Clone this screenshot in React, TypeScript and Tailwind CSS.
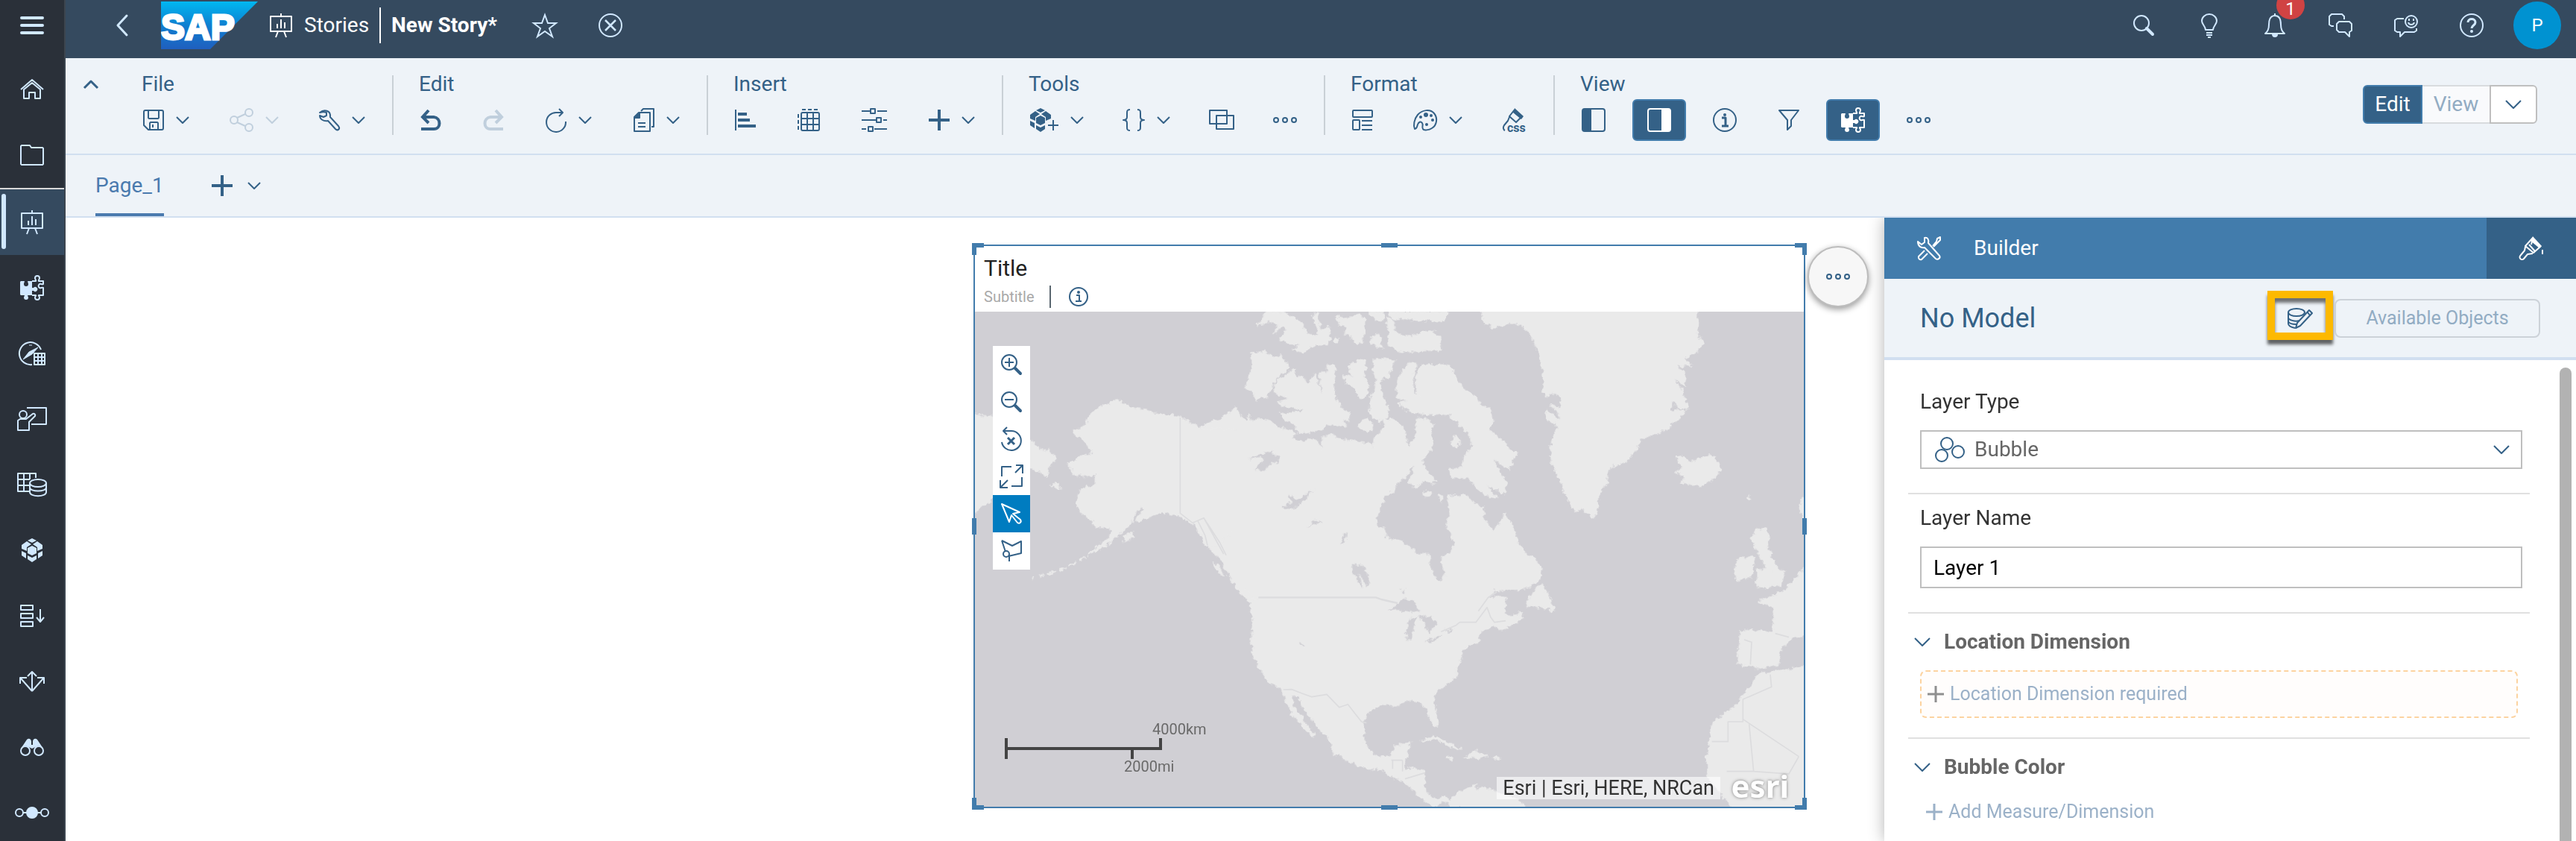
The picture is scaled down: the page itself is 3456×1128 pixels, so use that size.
import React from "react";

type Kids = { children?: React.ReactNode };

function Glyph({ w, h, sw = 2, children }: Kids & { w: number; h: number; sw?: number }) {
  return (
    <svg
      width={w}
      height={h}
      viewBox={`0 0 ${w} ${h}`}
      fill="none"
      stroke="currentColor"
      strokeWidth={sw}
      strokeLinejoin="round"
      aria-hidden="true"
      className="shrink-0 overflow-visible"
    >
      {children}
    </svg>
  );
}

/* ---------- icons ---------- */

const Chevron = () => (
  <Glyph w={18} h={10}>
    <path d="M1 1l8 8 8-8" />
  </Glyph>
);
const ChevronWide = () => (
  <Glyph w={22} h={12}>
    <path d="M1 1l10 10L21 1" />
  </Glyph>
);
const ChevronUp = () => (
  <Glyph w={22} h={14} sw={3}>
    <path d="M2 12l9-9 9 9" />
  </Glyph>
);
const Plus = () => (
  <Glyph w={28} h={28} sw={4}>
    <path d="M14 0v28M0 14h28" />
  </Glyph>
);
const PlusSmall = () => (
  <Glyph w={22} h={22} sw={3}>
    <path d="M11 0v22M0 11h22" />
  </Glyph>
);
const Dots = () => (
  <Glyph w={32} h={10}>
    <circle cx="4" cy="5" r="3" />
    <circle cx="16" cy="5" r="3" />
    <circle cx="28" cy="5" r="3" />
  </Glyph>
);
const Menu = () => (
  <Glyph w={32} h={24} sw={4}>
    <path d="M2 2h28M2 12h28M2 22h28" strokeLinecap="round" />
  </Glyph>
);
const Back = () => (
  <Glyph w={16} h={28} sw={3}>
    <path d="M14 1L2 14l12 13" strokeLinecap="round" />
  </Glyph>
);
const Easel = () => (
  <Glyph w={30} h={32}>
    <path d="M1 4h28v20H1zM15 0v4M11 24l-3 8M19 24l3 8M10 20v-6M15 20V8M20 20v-8" />
  </Glyph>
);
const Star = () => (
  <Glyph w={32} h={32}>
    <path d="M16 2l4 11h11l-9 7 4 11-10-7-10 7 4-11-9-7h11z" strokeLinejoin="miter" />
  </Glyph>
);
const CloseCircle = () => (
  <Glyph w={32} h={32}>
    <circle cx="16" cy="16" r="15" />
    <path d="M9 9l14 14M23 9L9 23" strokeWidth="2.5" />
  </Glyph>
);
const Search = () => (
  <Glyph w={28} h={28}>
    <circle cx="11" cy="11" r="10" />
    <path d="M18 18l8 8" strokeWidth="4" strokeLinecap="round" />
  </Glyph>
);
const Bulb = () => (
  <Glyph w={22} h={32}>
    <path d="M6 22c0-5-5-7-5-12a10 9 0 0 1 20 0c0 5-5 7-5 12zM7 26h8M7 29h8M9 32h4" />
  </Glyph>
);
const Bell = () => (
  <Glyph w={28} h={32}>
    <path d="M1 27c4-3 5-6 5-12 0-7 2-12 8-12s8 5 8 12c0 6 1 9 5 12zM14 3V0" />
    <path d="M10 28h8a4 4 0 0 1-8 0z" fill="currentColor" stroke="none" />
  </Glyph>
);
const Chats = () => (
  <Glyph w={32} h={32}>
    <path d="M7 17H4l-3-2V4l3-3h14l3 3v4" />
    <path d="M14 11h14l3 3v9l-3 2v6l-6-6h-8l-3-3v-8z" />
  </Glyph>
);
const Feedback = () => (
  <Glyph w={32} h={32}>
    <path d="M13 7H4L1 9v14l3 2h4v6l6-6h13l3-2v-3" />
    <circle cx="23" cy="11" r="8" />
    <path d="M19 12c1 4 7 4 8 0" />
    <path d="M20 7v3M26 7v3" />
  </Glyph>
);
const Help = () => (
  <Glyph w={32} h={32}>
    <circle cx="16" cy="16" r="15" />
    <path d="M11 12c0-6 10-6 10 0 0 4-5 4-5 8" strokeWidth="3" />
    <circle cx="16" cy="24" r="2" fill="currentColor" stroke="none" />
  </Glyph>
);

const Save = () => (
  <Glyph w={28} h={28}>
    <path d="M3 1h22a2 2 0 0 1 2 2v22a2 2 0 0 1-2 2H7l-6-6V3a2 2 0 0 1 2-2z" />
    <path d="M7 1v10l1 1h12l1-1V1M9 27v-9l1-1h9l1 1v9M13 20v4" />
  </Glyph>
);
const Share = () => (
  <Glyph w={32} h={32}>
    <circle cx="26" cy="6" r="5" />
    <circle cx="6" cy="16" r="5" />
    <circle cx="26" cy="26" r="5" />
    <path d="M10 13l11-5M10 19l11 5" />
  </Glyph>
);
const Wrench = () => (
  <Glyph w={28} h={28}>
    <path d="M1 4c6-5 15-3 14 6l11 12c3 4-1 7-4 4L12 15C6 16 1 13 1 8l5 2 4-2V4L6 3z" />
  </Glyph>
);
const Undo = () => (
  <Glyph w={28} h={28} sw={4}>
    <path d="M11 1L3 10l8 8M3 10h15c10 1 10 16 0 16H1" strokeLinejoin="miter" />
  </Glyph>
);
const Redo = () => (
  <Glyph w={28} h={28} sw={4}>
    <path d="M17 1l8 9-8 8M25 10H10c-10 1-10 16 0 16h17" strokeLinejoin="miter" />
  </Glyph>
);
const Refresh = () => (
  <Glyph w={28} h={32}>
    <path d="M23 6h-8A13 13 0 1 0 27 18M18 1l5 5-5 5" />
  </Glyph>
);
const Copy = () => (
  <Glyph w={28} h={32}>
    <path d="M10 4l3-3h14v24h-3M1 12l6-6h15v25H1zM6 20h10M6 25h10" />
    <path d="M1 13l7-7v7z" fill="currentColor" />
  </Glyph>
);
const BarChart = () => (
  <Glyph w={28} h={28}>
    <path d="M1 0v28" />
    <path d="M4 4h12v4H4zM4 12h16v4H4zM4 20h24v4H4z" fill="currentColor" stroke="none" />
  </Glyph>
);
const Table = () => (
  <Glyph w={30} h={30}>
    <rect x="5" y="5" width="24" height="24" rx="2" />
    <path d="M13 5v24M21 5v24M5 13h24M5 21h24M6 1h5M14 1h5M22 1h5M1 7v5M1 15v5M1 23v5" />
  </Glyph>
);
const Sliders = () => (
  <Glyph w={34} h={30}>
    <path d="M0 3h12M21 3h13M0 15h20M29 15h5M0 27h6M17 27h17" />
    <path d="M12 0h6v6h-6zM20 12h6v6h-6zM9 24h6v6H9z" />
  </Glyph>
);
const Cube = () => (
  <Glyph w={28} h={32}>
    <path
      d="M14 0l6 3-6 3-6-3zM0 9l7-5 6 4-6 4v5l-7-3zM28 9l-7-5-6 4 6 4v5l7-3zM14 10l6 3v7l-6 3-6-3v-7zM0 17l6 3v7l-6-4zM28 17l-6 3v7l6-4zM8 23l6 3 6-3v5l-6 4-6-4z"
      fill="currentColor"
      stroke="none"
    />
  </Glyph>
);
const CubeAdd = () => (
  <Glyph w={38} h={32}>
    <path
      d="M14 0l6 3-6 3-6-3zM0 9l7-5 6 4-6 4v5l-7-3zM28 9l-7-5-6 4 6 4v5l7-3zM14 10l6 3v7l-6 3-6-3v-7zM0 17l6 3v7l-6-4zM8 23l6 3 6-3v5l-6 4-6-4z"
      fill="currentColor"
      stroke="none"
    />
    <path d="M31 16v14M24 23h14" />
  </Glyph>
);
const Braces = () => (
  <Glyph w={30} h={30}>
    <path d="M10 1C6 1 6 3 6 6v5c0 2-1 4-5 4 4 0 5 2 5 4v5c0 3 0 5 4 5M20 1c4 0 4 2 4 5v5c0 2 1 4 5 4-4 0-5 2-5 4v5c0 3 0 5-4 5" />
  </Glyph>
);
const Frames = () => (
  <Glyph w={34} h={28}>
    <path d="M1 1h23v18H1zM10 8h23v18H10z" />
  </Glyph>
);
const Layout = () => (
  <Glyph w={28} h={28}>
    <rect x="1" y="1" width="26" height="9" rx="1" />
    <rect x="1" y="14" width="9" height="13" rx="1" />
    <path d="M13 15h14M13 21h14M13 27h14" />
  </Glyph>
);
const Palette = () => (
  <Glyph w={32} h={28}>
    <path d="M2 26C0 21 1 13 6 7c6-7 17-8 22-2s4 16-3 20c-4 3-11 3-12 1-2-3 1-5-1-8s-5-1-6 2-1 6-4 6z" />
    <g fill="currentColor" stroke="none">
      <circle cx="17" cy="7" r="3" />
      <circle cx="10" cy="10" r="2" />
      <circle cx="24" cy="8" r="2" />
      <circle cx="26" cy="14" r="2" />
      <circle cx="18" cy="20" r="2" />
    </g>
  </Glyph>
);
const CssBrush = () => (
  <Glyph w={32} h={32}>
    <path d="M16 2L9 11l9 8 8-8M9 12l-2 5-5 6c-2 3-1 6 1 7" />
    <path d="M16 0l12 11-3 4-11-9z" fill="currentColor" stroke="none" />
    <text x="6" y="32" className="fill-current font-[Roboto] text-[16px] font-bold" stroke="none">
      css
    </text>
  </Glyph>
);
const PanelLeft = () => (
  <Glyph w={32} h={32}>
    <rect x="1" y="1" width="30" height="30" rx="3" />
    <path d="M2 1h11v30H2z" fill="currentColor" stroke="none" />
  </Glyph>
);
const PanelRight = () => (
  <Glyph w={32} h={32}>
    <rect x="1" y="1" width="30" height="30" rx="3" />
    <path d="M19 1h11v30H19z" fill="currentColor" stroke="none" />
  </Glyph>
);
const Info = () => (
  <Glyph w={32} h={32}>
    <circle cx="16" cy="16" r="15" />
    <path d="M12 13h5v11M12 24h9" strokeWidth="3" />
    <circle cx="16" cy="9" r="2" fill="currentColor" stroke="none" />
  </Glyph>
);
const InfoSmall = () => (
  <Glyph w={26} h={26}>
    <circle cx="13" cy="13" r="12" />
    <path d="M10 11h4v8M9 19h8" />
    <circle cx="13" cy="7" r="2" fill="currentColor" stroke="none" />
  </Glyph>
);
const Filter = () => (
  <Glyph w={28} h={28}>
    <path d="M1 1h26L17 14v8l-5 5V14z" />
  </Glyph>
);
const Puzzle = () => (
  <Glyph w={32} h={32}>
    <path
      d="M1 7h4c2 0 0 2 0 4a3 3 0 0 0 6 0c0-2-2-4 0-4h5v9h2a3 3 0 1 1 0 4h-2v6h-5c-2 0 0 2 0 3a3 3 0 0 1-6 0c0-1 2-3 0-3H1l-1-1V8z"
      fill="currentColor"
      stroke="none"
    />
    <path d="M16 7h5c1-1-1-2-1-4a3 3 0 0 1 6 0c0 2-2 3-1 4h6v4c-2 1-3-1-5 0a3 3 0 0 0 0 5c2 1 3-1 5 0v10h-6c-1 1 1 1 1 3a3 3 0 0 1-6 0c0-2 2-2 1-3h-5" />
  </Glyph>
);

const Home = () => (
  <Glyph w={32} h={28}>
    <path d="M1 14L16 1l15 13M5 14v12h7v-8h8v8h7V14L16 5z" />
  </Glyph>
);
const Folder = () => (
  <Glyph w={32} h={28}>
    <path d="M1 26V2l1-1h11l2 3h15l1 1v21l-1 1H2z" />
  </Glyph>
);
const Compass = () => (
  <Glyph w={36} h={32}>
    <path d="M18 31A15 15 0 1 1 30 11" />
    <path d="M6 24l8-10 12-6-8 9zM14 5h4" fill="currentColor" strokeWidth="1" />
    <path d="M21 16h14v15H21zM21 21h14M21 26h14M26 16v15M31 16v15" />
  </Glyph>
);
const Presenter = () => (
  <Glyph w={40} h={32}>
    <path d="M13 1h26v22H19" />
    <circle cx="8" cy="10" r="5" />
    <path d="M1 31V18l3-2h8l9-7c2-1 4 1 3 3l-8 8v11z" />
  </Glyph>
);
const TableDb = () => (
  <Glyph w={40} h={32}>
    <path d="M16 25H1V1h24v6M1 9h16M1 17h15M9 1v24M17 1v8" />
    <ellipse cx="28" cy="14" rx="11" ry="5" />
    <path d="M17 14v12c0 7 22 7 22 0V14M17 20c0 6 22 6 22 0" />
  </Glyph>
);
const ListDown = () => (
  <Glyph w={32} h={30}>
    <path d="M1 1h16v6H1zM1 12h16v6H1zM1 23h16v6H1zM27 6v16M22 17l5 6 5-6" />
  </Glyph>
);
const Spread = () => (
  <Glyph w={34} h={28}>
    <path d="M17 27V2M11 7l6-6 6 6M17 27L2 10M1 17V9h9M17 27l15-17M33 17V9h-9" />
  </Glyph>
);
const Binoculars = () => (
  <Glyph w={32} h={24}>
    <path d="M1 14L9 2c2-2 5-2 6 2v5h2V4c1-4 4-4 6-2l8 12-6-4-9 4-9-4z" fill="currentColor" stroke="none" />
    <circle cx="7" cy="17" r="6" />
    <circle cx="25" cy="17" r="6" />
  </Glyph>
);
const Timeline = () => (
  <Glyph w={46} h={16}>
    <circle cx="6" cy="8" r="5" />
    <circle cx="40" cy="8" r="5" />
    <circle cx="23" cy="8" r="7" fill="currentColor" />
    <path d="M11 8h24" />
  </Glyph>
);

const Tools = () => (
  <Glyph w={32} h={32}>
    <path d="M1 7l5 4 4-3V2C14 1 16 4 15 9l15 17c2 3-2 6-5 4L10 15C5 16 1 13 1 7zM10 19l-8 8c-1 3 2 5 4 4l8-8M21 13l5-6 1-4 4-2v4l-3 3-6 6" />
  </Glyph>
);
const Brush = () => (
  <Glyph w={32} h={32}>
    <path d="M18 2L8 13l11 9 10-9M18 2l-2 9M8 14l-1 5-5 6c-4 4 1 8 4 5l5-6 7-1M13 11l8 9" />
    <path d="M18 0l12 13-3 3-12-10z" fill="currentColor" stroke="none" />
    <path d="M31 18v6" />
  </Glyph>
);
const DbEdit = () => (
  <Glyph w={34} h={28}>
    <ellipse cx="12" cy="6" rx="11" ry="5" />
    <path d="M1 6v15c0 3 4 5 9 6M1 13c0 3 9 6 15 4M1 18c1 3 6 4 11 4" />
    <path d="M11 27l2-7L29 3l4 4-16 17zM27 6l3 4" />
  </Glyph>
);
const Bubbles = () => (
  <Glyph w={40} h={34}>
    <circle cx="16" cy="9" r="8" />
    <circle cx="31" cy="20" r="8" />
    <circle cx="9" cy="25" r="8" />
  </Glyph>
);
const ZoomIn = () => (
  <Glyph w={28} h={28}>
    <circle cx="11" cy="11" r="10" />
    <path d="M11 5v12M5 11h12" />
    <path d="M19 19l7 7" strokeWidth="4" strokeLinecap="round" />
  </Glyph>
);
const ZoomOut = () => (
  <Glyph w={28} h={28}>
    <circle cx="11" cy="11" r="10" />
    <path d="M5 11h12" />
    <path d="M19 19l7 7" strokeWidth="4" strokeLinecap="round" />
  </Glyph>
);
const ResetView = () => (
  <Glyph w={28} h={32}>
    <path d="M3 5h11a13 13 0 1 1-13 15M8 0L3 5l5 5" />
    <path d="M9 14l9 9M18 14l-9 9" strokeWidth="3" />
  </Glyph>
);
const Expand = () => (
  <Glyph w={32} h={32}>
    <path d="M16 3H3v13M30 17v12H16M22 1h9v11M31 1L21 11M1 21v10h10M1 31l10-10" />
  </Glyph>
);
const Pointer = () => (
  <Glyph w={28} h={28}>
    <path d="M1 1l10 24 3-9 8 10c3 2 6-1 4-4l-10-8 9-2z" />
  </Glyph>
);
const Lasso = () => (
  <Glyph w={28} h={30}>
    <path d="M1 1l14 7 12-6v16l-17 4M1 1l5 15M11 20v9" />
    <circle cx="7" cy="19" r="4" />
  </Glyph>
);

const SapLogo = () => (
  <svg width="130" height="64" viewBox="0 0 130 64" role="img" aria-label="SAP">
    <defs>
      <linearGradient id="sapFill" x1="0" y1="0" x2="0" y2="1">
        <stop offset="0" stopColor="#00b8f1" />
        <stop offset="0.5" stopColor="#0f7fd0" />
        <stop offset="1" stopColor="#1f5fbf" />
      </linearGradient>
    </defs>
    <path d="M0 0h130L66 64H0z" fill="url(#sapFill)" />
    <text
      x="0"
      y="51"
      fill="#fff"
      stroke="#fff"
      strokeWidth="3"
      className="font-['Liberation_Sans'] text-[48px] font-bold"
    >
      SAP
    </text>
  </svg>
);

/* ---------- map ---------- */

const mainland =
  "-60,430 0,455 35,475 40,460 75,440 110,430 150,405 165,395 175,385 190,410 215,445 225,415 240,440 265,430 310,440 345,465 400,475 420,490 395,510 430,522 480,512 505,520 520,560 522,505 560,495 600,515 650,520 700,525 725,540 730,500 770,470 765,440 790,430 820,440 850,465 860,520 870,545 890,510 900,480 900,430 940,430 970,450 960,490 970,540 950,570 920,600 945,640 985,685 960,692 930,680 905,708 870,690 885,650 895,610 870,640 855,670 825,685 805,720 780,740 755,785 742,830 745,865 770,870 785,920 830,915 870,945 910,975 955,980 955,1026 970,1056 995,1088 1018,1061 1005,1016 1003,986 1040,970 1050,930 1040,895 1020,865 1033,820 1028,740 1060,740 1105,740 1130,770 1170,790 1175,840 1205,880 1235,860 1255,810 1280,850 1300,900 1320,950 1350,980 1380,995 1407,1040 1405,1066 1383,1089 1340,1116 1220,1121 1190,1150 1215,1146 1255,1151 1262,1176 1255,1206 1285,1231 1320,1206 1335,1231 1300,1251 1245,1284 1230,1266 1200,1271 1160,1286 1150,1306 1158,1326 1110,1346 1090,1366 1075,1406 1062,1436 1062,1466 1020,1501 980,1531 968,1566 985,1626 990,1656 978,1671 950,1631 945,1596 915,1573 880,1566 840,1571 820,1588 780,1581 735,1591 700,1621 690,1666 690,1726 710,1766 750,1793 795,1786 815,1746 845,1736 875,1738 868,1776 855,1806 850,1846 890,1838 930,1846 935,1896 940,1936 980,1961 1015,1951 1035,1966 1070,1936 1110,1916 1145,1901 1135,1930 1160,1912 1200,1921 1230,1936 1300,1956 1350,2000 1040,2000 1028,1975 1000,1975 985,1992 960,1985 930,1965 895,1935 865,1905 830,1880 790,1868 770,1850 740,1835 710,1842 650,1820 600,1795 560,1770 560,1740 540,1710 500,1670 470,1630 440,1590 425,1550 398,1545 410,1590 440,1630 465,1670 490,1705 485,1712 450,1680 435,1650 400,1625 385,1590 370,1550 355,1515 300,1485 275,1440 245,1390 237,1320 242,1240 230,1170 180,1120 145,1060 120,1010 95,980 60,950 20,880 0,855 -60,820";

const arctic = [
  "235,165 290,160 330,183 360,180 390,225 345,265 325,285 300,340 255,358 245,325 210,305 225,270 240,210",
  "410,232 415,265 445,258 460,290 490,255 510,290 515,325 522,320 510,240 545,245 540,215 570,212 575,240 565,290 580,360 600,385 635,410 630,440 600,435 620,460 580,460 540,450 520,475 430,490 415,460 375,440 355,410 440,400 445,390 365,385 340,365 385,348 330,325 325,300 345,275",
  "635,210 690,190 700,235 685,250 715,290 700,335 672,348 650,310 620,285 605,255 645,262 625,220",
  "730,190 815,195 800,235 785,270 760,270 755,310 775,360 790,410 770,440 730,430 712,400 715,350 735,310 740,270 725,240",
  "835,250 870,205 905,212 885,260 890,320 915,340 900,318 897,260 920,215 975,212 1030,215 1062,262 1090,310 1140,340 1165,380 1195,385 1215,430 1195,475 1250,520 1275,550 1310,575 1290,600 1275,640 1235,610 1215,590 1225,630 1265,690 1255,735 1180,695 1230,750 1185,745 1140,710 1110,670 1040,665 1030,635 1090,625 1085,595 1125,545 1115,500 1080,465 1040,420 1000,410 960,415 890,410 850,390 830,365 865,360 822,345 822,300",
  "350,110 380,70 355,60 330,90 345,45 300,40 260,60 290,10 300,0 370,0 400,20 440,45 465,90 510,95 490,40 480,20 500,5 515,70 550,60 555,100 545,130 490,135 440,165 405,155 430,130 375,125",
  "575,15 620,30 660,10 690,25 690,100 680,130 650,128 640,100 610,85 615,60 590,50",
  "720,100 750,90 765,150 715,130",
  "710,0 770,0 765,40 730,30",
  "780,20 810,40 820,90 880,100 910,85 960,75 1000,100 995,155 930,158 840,162 785,135 790,80",
  "790,0 1030,0 1015,35 985,45 960,35 880,35 840,25 800,30",
  "665,460 695,425 730,460 710,490",
];

const atlantic = [
  "75,-9 100,50 135,65 200,45 240,50 280,90 310,160 330,240 330,330 345,345 370,320 400,350 408,385 355,375 385,400 398,425 380,450 345,435 345,395 352,405 400,440 415,470 375,480 360,540 365,610 390,660 415,720 455,800 490,795 535,830 550,790 555,740 580,700 600,625 660,610 700,560 730,510 830,475 905,400 875,398 845,400 850,350 870,390 915,390 890,320 860,270 905,300 900,235 860,215 930,220 900,185 945,170 975,125 950,90 955,-9",
  "410,400 430,500 380,460",
  "865,590 890,578 912,605 940,600 1005,575 1025,590 1048,630 1030,665 960,705 885,685 905,670 865,645 895,625",
  "1185,880 1225,870 1245,905 1230,945 1260,1000 1280,1040 1300,1060 1290,1100 1245,1110 1215,1105 1225,1020 1190,960 1170,920",
];

const europe = [
  "1320,870 1345,870 1338,920 1315,930 1312,900",
  "1350,900 1395,905 1390,940 1365,950 1350,945",
  "1435,890 1415,925 1400,945 1405,950 1370,975 1352,985 1378,1005 1378,1068 1322,1062 1318,1150 1350,1165 1385,1155 1390,1110 1410,1080 1435,1075",
  "1435,1160 1390,1170 1350,1180 1345,1200 1312,1265 1275,1310 1265,1400 1265,1450 1310,1540 1435,1540",
  "1435,700 1422,730 1435,800",
  "985,940 995,970 1005,1010 960,995 970,960",
];

const bering = [
  "880,750 840,738 800,738 760,725 720,715 690,712 670,695 640,685 615,675 600,695 570,700 545,720 520,735 510,760 490,785 450,798 452,815 490,840 505,865 530,890 520,905 485,898 455,925 425,938 450,965 450,980 500,985 540,980 540,1020 500,1030 480,1040 470,1060 460,1095 480,1125 500,1150 530,1165 535,1190 570,1190 600,1200 605,1215 590,1235 560,1258 535,1280 510,1300 540,1290 580,1270 620,1230 660,1200 690,1170 695,1140 725,1108 740,1115 710,1145 700,1170 740,1155 780,1140 800,1130 840,1140 870,1140 900,1155 930,1170 960,1200 975,1230 990,1270 1020,1270 1100,1200 1100,800 1000,800 960,795 930,770",
  "40,735 90,745 150,745 150,1060 95,1100 40,1145",
  "250,820 276,835 320,885 350,878 385,915 350,950 345,990 310,965 250,950",
  "355,1020 380,1018 405,1035 385,1035",
  "650,1230 690,1210 690,1235 655,1250",
];

const caribbean = [
  "920,760 965,740 1030,765 1085,795 1040,790 980,755",
  "1090,825 1140,800 1190,825 1140,832",
  "170,140 215,150 260,200 225,185",
  "85,45 105,55 125,100 100,80",
];

const lakes = [
  "790,1205 850,1155 890,1165 915,1210 860,1205 820,1200",
  "870,1240 900,1230 890,1270 880,1320 862,1325 860,1280",
  "905,1225 960,1225 990,1255 965,1270 955,1300 945,1290 930,1250",
  "940,1325 1005,1302 985,1318 950,1332",
  "1005,1285 1055,1275 1045,1287",
  "640,1020 690,1020 712,1090 705,1110 682,1070 672,1050 685,1115 655,1070",
  "222,593 320,557 315,572 350,580 345,610 320,605 285,645 250,632 285,605 275,588",
  "360,785 400,765 385,732 420,755 490,720 440,765 415,788 370,795",
  "460,868 490,840 525,848 485,855",
  "595,938 610,895 622,895 612,930",
  "840,1120 852,1115 852,1135 842,1135",
  "428,1330 436,1330 450,1350 440,1348",
];

function WorldMap() {
  return (
    <svg
      viewBox="-876 0 3336 1992"
      preserveAspectRatio="none"
      className="absolute inset-0 h-full w-full"
      role="img"
      aria-label="Map of North America and the North Atlantic"
    >
      <defs>
        <filter id="coast" filterUnits="userSpaceOnUse" x="-876" y="0" width="3336" height="1992">
          <feTurbulence type="fractalNoise" baseFrequency="0.05" numOctaves="3" seed="4" result="n" />
          <feDisplacementMap in="SourceGraphic" in2="n" scale="26" xChannelSelector="R" yChannelSelector="G" />
        </filter>
      </defs>
      <g filter="url(#coast)">
        <g fill="#eaeaea" stroke="#eaeaea" strokeWidth="3" strokeLinejoin="round">
          <polygon points={mainland} />
          {arctic.map((p) => (
            <polygon key={p} points={p} />
          ))}
          <ellipse cx="1060" cy="522" rx="18" ry="24" />
          <ellipse cx="578" cy="115" rx="9" ry="11" />
          <ellipse cx="942" cy="733" rx="16" ry="10" />
          <ellipse cx="997" cy="750" rx="7" ry="14" />
          <g transform="translate(1080 0)">
            {atlantic.map((p) => (
              <polygon key={p} points={p} />
            ))}
            <circle cx="1158" cy="748" r="8" />
          </g>
          <g transform="matrix(2.3725 0 0 1.5113 -930 -324)">
            {europe.map((p) => (
              <polygon key={p} points={p} />
            ))}
          </g>
          <g transform="translate(-930 -324)">
            {bering.map((p) => (
              <polygon key={p} points={p} />
            ))}
            <path d="M535 1285L440 1345 380 1370 280 1398" fill="none" strokeWidth="8" strokeDasharray="34 14 20 22" />
          </g>
          <g transform="translate(0 966)">
            {caribbean.map((p) => (
              <polygon key={p} points={p} />
            ))}
            <ellipse cx="1225" cy="830" rx="14" ry="4" />
            <ellipse cx="1040" cy="832" rx="14" ry="4" />
          </g>
        </g>
        <g fill="#d0cfd4">
          {lakes.map((p) => (
            <polygon key={p} points={p} />
          ))}
        </g>
      </g>
      <g fill="none" stroke="#dcdcde" strokeWidth="5" strokeLinejoin="round">
        <path d="M265 1150H738L760 1158 825 1173" strokeWidth="7" />
        <path d="M-50 426V811L0 850 45 830 110 930 135 980M20 840L50 900 60 940M45 830L100 930 125 975" />
        <path d="M1000 1288L1060 1262 1075 1250H1140L1185 1190 1200 1230 1215 1250 1260 1244" />
        <path d="M1150 1205L1190 1150 1225 1128" />
        <path d="M365 1521L400 1520 440 1536 480 1550 540 1540 590 1592 625 1580 660 1625 680 1650 700 1655" />
        <path d="M800 1805H845M805 1805V1840M845 1805V1850M855 1880L935 1856" />
        <path d="M2090 1730H2155V1650H2215V1560L2330 1510 2325 1460M2215 1640L2440 1790M2240 1660L2258 1850H2150M2258 1850L2400 1860 2440 1790" />
        <path d="M2220 1320L2250 1330 2245 1420M2345 1295L2400 1310" />
      </g>
    </svg>
  );
}

/* ---------- shell ---------- */

const navItems: { label: string; icon: React.ReactNode; active?: boolean }[] = [
  { label: "Home", icon: <Home /> },
  { label: "Files", icon: <Folder /> },
  { label: "Stories", icon: <Easel />, active: true },
  { label: "Analytic Applications", icon: <Puzzle /> },
  { label: "Data Analyzer", icon: <Compass /> },
  { label: "Digital Boardroom", icon: <Presenter /> },
  { label: "Datasets", icon: <TableDb /> },
  { label: "Modeler", icon: <Cube /> },
  { label: "Data Actions", icon: <ListDown /> },
  { label: "Allocations", icon: <Spread /> },
  { label: "Data Locking", icon: <Binoculars /> },
  { label: "Connections", icon: <Timeline /> },
];

function SideNav() {
  return (
    <nav className="flex w-[88px] shrink-0 flex-col overflow-hidden border-r-2 border-[#3c454f] bg-[#2a3039] text-[#d1e8ff]">
      <button aria-label="Menu" className="flex h-[76px] shrink-0 items-center justify-center pb-2">
        <Menu />
      </button>
      {navItems.map((n) => (
        <button
          key={n.label}
          aria-label={n.label}
          className={
            n.active
              ? "relative flex h-[90px] shrink-0 items-center justify-center border-t-2 border-[#d9d9d9] bg-[#354a5f]"
              : "flex h-[88px] shrink-0 items-center justify-center"
          }
        >
          {n.active && <span className="absolute top-1.5 bottom-2 left-0.5 w-1.5 rounded-full bg-[#d1e8ff]" />}
          {n.icon}
        </button>
      ))}
    </nav>
  );
}

const shellActions: { label: string; icon: React.ReactNode; badge?: string }[] = [
  { label: "Search", icon: <Search /> },
  { label: "Tips", icon: <Bulb /> },
  { label: "Notifications", icon: <Bell />, badge: "1" },
  { label: "Discussions", icon: <Chats /> },
  { label: "Feedback", icon: <Feedback /> },
  { label: "Help", icon: <Help /> },
];

function ShellBar() {
  return (
    <header className="flex h-[78px] shrink-0 items-center overflow-hidden bg-[#354a5f] pr-2 pb-[10px] text-[#d1e8ff]">
      <button aria-label="Back" className="flex h-16 w-32 items-center pl-[68px]">
        <Back />
      </button>
      <SapLogo />
      <a href="#stories" className="ml-4 flex items-center gap-4 text-white">
        <Easel />
        Stories
      </a>
      <span className="ml-3.5 h-12 w-0.5 bg-white" />
      <h1 className="ml-3.5 font-bold text-white">New Story*</h1>
      <button aria-label="Favorite" className="ml-12">
        <Star />
      </button>
      <button aria-label="Close" className="ml-14">
        <CloseCircle />
      </button>
      <div className="ml-auto flex items-center">
        {shellActions.map((a) => (
          <button key={a.label} aria-label={a.label} className="relative flex h-16 w-[88px] items-center justify-center">
            {a.icon}
            {a.badge && (
              <span className="absolute -top-3.5 right-1 flex size-[38px] items-end justify-center rounded-full bg-[#d04343] pb-1 text-[24px] leading-5 text-white">
                {a.badge}
              </span>
            )}
          </button>
        ))}
        <button aria-label="Profile" className="mx-3 flex size-16 items-center justify-center rounded-full bg-[#0092d1] text-[24px] text-white">
          P
        </button>
      </div>
    </header>
  );
}

type Tool = { label: string; icon: React.ReactNode; menu?: boolean; disabled?: boolean; on?: boolean };

const groups: { title: string; row: string; tools: Tool[] }[] = [
  {
    title: "File",
    row: "mt-4 flex h-10 items-center gap-[54px]",
    tools: [
      { label: "Save", icon: <Save />, menu: true },
      { label: "Share", icon: <Share />, menu: true, disabled: true },
      { label: "Settings", icon: <Wrench />, menu: true },
    ],
  },
  {
    title: "Edit",
    row: "mt-4 flex h-10 items-center gap-14",
    tools: [
      { label: "Undo", icon: <Undo /> },
      { label: "Redo", icon: <Redo />, disabled: true },
      { label: "Refresh", icon: <Refresh />, menu: true },
      { label: "Copy", icon: <Copy />, menu: true },
    ],
  },
  {
    title: "Insert",
    row: "mt-4 flex h-10 items-center gap-14",
    tools: [
      { label: "Chart", icon: <BarChart /> },
      { label: "Table", icon: <Table /> },
      { label: "Input Control", icon: <Sliders /> },
      { label: "Add", icon: <Plus />, menu: true },
    ],
  },
  {
    title: "Tools",
    row: "mt-4 flex h-10 items-center gap-[52px]",
    tools: [
      { label: "Add Model", icon: <CubeAdd />, menu: true },
      { label: "Scripting", icon: <Braces />, menu: true },
      { label: "Popup", icon: <Frames /> },
      { label: "More Tools", icon: <Dots /> },
    ],
  },
  {
    title: "Format",
    row: "mt-4 flex h-10 items-center gap-[54px]",
    tools: [
      { label: "Layout", icon: <Layout /> },
      { label: "Theme", icon: <Palette />, menu: true },
      { label: "CSS Editor", icon: <CssBrush /> },
    ],
  },
  {
    title: "View",
    row: "mt-4 flex h-10 items-center gap-14",
    tools: [
      { label: "Left Panel", icon: <PanelLeft /> },
      { label: "Right Panel", icon: <PanelRight />, on: true },
      { label: "Info Panel", icon: <Info /> },
      { label: "Filter", icon: <Filter /> },
      { label: "Widgets", icon: <Puzzle />, on: true },
      { label: "More Views", icon: <Dots /> },
    ],
  },
];

function ToolButton({ t }: { t: Tool }) {
  if (t.on) {
    return (
      <button
        aria-label={t.label}
        aria-pressed="true"
        className="-mx-5 -my-2 flex h-14 w-[72px] items-center justify-center rounded-md border-2 border-[#427cac] bg-[#346187] text-white"
      >
        {t.icon}
      </button>
    );
  }
  return (
    <button
      aria-label={t.label}
      disabled={t.disabled}
      className={t.disabled ? "flex items-center gap-4 text-[#c0cfdd]" : "flex items-center gap-4"}
    >
      {t.icon}
      {t.menu && <Chevron />}
    </button>
  );
}

function Toolbar() {
  return (
    <div className="flex h-[130px] shrink-0 border-b-2 border-[#d1dff0] bg-[#eef3f8] pt-[23px] pr-[52px] text-[#346187]">
      <button aria-label="Collapse toolbar" className="flex h-6 w-[68px] shrink-0 items-center justify-center">
        <ChevronUp />
      </button>
      {groups.map((g) => (
        <section key={g.title} aria-label={g.title} className="h-20 shrink-0 border-r-2 border-[#c9d0d6] px-9 last-of-type:border-r-0">
          <h2 className="-ml-0.5 h-6 leading-6">{g.title}</h2>
          <div className={g.row}>
            {g.tools.map((t) => (
              <ToolButton key={t.label} t={t} />
            ))}
          </div>
        </section>
      ))}
      <div className="mt-[13px] ml-auto flex h-[52px]">
        <button className="w-20 rounded-l-md border-2 border-[#427cac] bg-[#346187] text-white">Edit</button>
        <button className="w-[90px] border-y-2 border-[#d8dbde] bg-[#f9fafc] text-[#92acc3]">View</button>
        <button aria-label="View options" className="flex w-16 items-center justify-center rounded-r-md border-2 border-[#bfbfbf] bg-white">
          <ChevronWide />
        </button>
      </div>
    </div>
  );
}

function PageTabs() {
  return (
    <div className="flex h-[84px] shrink-0 items-stretch border-b-2 border-[#d1dff0] bg-[#eef3f8] pl-10 text-[#346187]">
      <a href="#page-1" className="flex items-center border-b-4 border-[#4a7aae] pt-1 text-[#4a7aae]">
        Page_1
      </a>
      <button aria-label="Add page" className="ml-16 flex items-center gap-5">
        <Plus />
        <Chevron />
      </button>
    </div>
  );
}

const mapTools: { label: string; icon: React.ReactNode; on?: boolean }[] = [
  { label: "Zoom in", icon: <ZoomIn /> },
  { label: "Zoom out", icon: <ZoomOut /> },
  { label: "Reset view", icon: <ResetView /> },
  { label: "Full extent", icon: <Expand /> },
  { label: "Select", icon: <Pointer />, on: true },
  { label: "Lasso", icon: <Lasso /> },
];

function Handles() {
  return (
    <>
      <span className="absolute -top-1 -left-1 size-4 border-t-6 border-l-6 border-[#427cac]" />
      <span className="absolute -top-1 -right-1 size-4 border-t-6 border-r-6 border-[#427cac]" />
      <span className="absolute -bottom-1 -left-1 size-4 border-b-6 border-l-6 border-[#427cac]" />
      <span className="absolute -right-1 -bottom-1 size-4 border-r-6 border-b-6 border-[#427cac]" />
      <span className="absolute -top-1 left-1/2 h-1.5 w-[22px] -translate-x-1/2 bg-[#427cac]" />
      <span className="absolute -bottom-1 left-1/2 h-1.5 w-[22px] -translate-x-1/2 bg-[#427cac]" />
      <span className="absolute top-1/2 -left-1 h-[22px] w-1.5 -translate-y-1/2 bg-[#427cac]" />
      <span className="absolute top-1/2 -right-1 h-[22px] w-1.5 -translate-y-1/2 bg-[#427cac]" />
    </>
  );
}

function GeoWidget() {
  return (
    <article className="absolute top-9 left-[1218px] flex h-[756px] w-[1116px] flex-col border-2 border-[#427cac] bg-white">
      <header className="h-[88px] shrink-0 px-3 pt-3">
        <h2 className="text-[30px] leading-9 text-[#222]">Title</h2>
        <div className="mt-1 flex items-center text-[#346187]">
          <span className="text-[20px] leading-8 text-[#a9a9a9]">Subtitle</span>
          <span className="ml-5 h-[30px] w-0.5 bg-[#5a6770]" />
          <button aria-label="Information" className="ml-6">
            <InfoSmall />
          </button>
        </div>
      </header>
      <div className="relative flex-1 overflow-hidden bg-[#d0cfd4]">
        <WorldMap />
        <div role="toolbar" aria-label="Map tools" className="absolute top-[46px] left-6 flex w-[50px] flex-col bg-white text-[#346187]">
          {mapTools.map((t) => (
            <button
              key={t.label}
              aria-label={t.label}
              className={
                t.on
                  ? "flex h-[50px] items-center justify-center bg-[#007cc0] text-white"
                  : "flex h-[50px] items-center justify-center"
              }
            >
              {t.icon}
            </button>
          ))}
        </div>
        <div className="absolute bottom-11 left-10 w-[270px] text-[20px] leading-5 text-[#6a6a6a]">
          <p className="pl-[198px]">4000km</p>
          <svg width="212" height="28" viewBox="0 0 212 28" fill="none" stroke="#444" strokeWidth="4" aria-hidden="true" className="mt-0.5 block">
            <path d="M2 0v28M2 14h209M209 0v16M171 14v14" />
          </svg>
          <p className="pl-[160px]">2000mi</p>
        </div>
        <p className="absolute right-28 bottom-2.5 bg-white/60 px-2 text-[27px] leading-[30px] text-[#323232]">
          Esri | Esri, HERE, NRCan
        </p>
        <span className="absolute right-5 bottom-1 font-['Noto_Sans'] text-[42px] leading-12 font-bold text-white [text-shadow:0_0_4px_#777]">
          esri
        </span>
      </div>
      <Handles />
      <button
        aria-label="More actions"
        className="absolute top-0 left-[1117px] flex size-[82px] items-center justify-center rounded-full border-2 border-[#bdbdbd] bg-[#f7f7f7] text-[#346187] shadow-[0_3px_8px_rgba(0,0,0,0.4)]"
      >
        <Dots />
      </button>
    </article>
  );
}

function Rule() {
  return <hr className="-mx-4 border-t-2 border-[#e0e0e0]" />;
}

function SectionHead({ children }: Kids) {
  return (
    <button className="-ml-2 flex h-10 items-center gap-[18px] font-bold text-[#666]">
      <span className="text-[#346187]">
        <ChevronWide />
      </span>
      {children}
    </button>
  );
}

function Builder() {
  return (
    <aside className="z-10 flex w-[928px] shrink-0 flex-col bg-white shadow-[0_0_20px_rgba(0,0,0,0.3)]">
      <div className="flex h-[82px] shrink-0 bg-[#427cac] text-white">
        <button className="flex flex-1 items-center gap-11 pl-11">
          <Tools />
          Builder
        </button>
        <button aria-label="Styling" className="flex w-[120px] items-center justify-center bg-[#346187]">
          <Brush />
        </button>
      </div>
      <div className="flex h-[109px] shrink-0 items-center border-b-4 border-[#d1dff0] bg-[#eef3f8] pr-12 pl-12 text-[#346187]">
        <h2 className="text-[36px]">No Model</h2>
        <button
          aria-label="Change data model"
          className="mt-[-8px] mr-0.5 ml-auto flex h-[66px] w-[88px] items-center justify-center border-10 border-[#fdb900] pt-2 shadow-[0_6px_4px_rgba(0,0,0,0.6),inset_0_6px_4px_rgba(0,0,0,0.55)]"
        >
          <DbEdit />
        </button>
        <button disabled className="h-[52px] w-[276px] rounded-lg border-2 border-[#ccd2d8] text-[25px] text-[#92acc3]">
          Available Objects
        </button>
      </div>
      <div className="relative flex-1 overflow-hidden pt-[36px] pr-[78px] pl-12">
        <label htmlFor="layer-type" className="block h-10 leading-10 text-[#333]">
          Layer Type
        </label>
        <div className="relative mt-[18px] mr-[-6px] mb-8 text-[#346187]">
          <select id="layer-type" className="h-[52px] w-full appearance-none border-2 border-[#bfbfbf] bg-white pl-[71px] text-[#666]">
            <option>Bubble</option>
          </select>
          <span className="pointer-events-none absolute inset-0 flex items-center justify-between pr-[17px] pl-5">
            <Bubbles />
            <ChevronWide />
          </span>
        </div>
        <Rule />
        <label htmlFor="layer-name" className="mt-3 block h-10 leading-10 text-[#333]">
          Layer Name
        </label>
        <div className="mt-[18px] mr-[-6px] mb-8">
          <input id="layer-name" defaultValue="Layer 1" className="block h-14 w-full border-2 border-[#bfbfbf] bg-white px-4 text-black" />
        </div>
        <Rule />
        <div className="pt-4.5 pb-[26px]">
          <SectionHead>Location Dimension</SectionHead>
          <button className="mt-[18px] flex h-16 w-full items-center gap-2 rounded-lg border-2 border-dashed border-[#fcd3a0] bg-[#fffdfc] px-2 text-[25px] text-[#9bb1c8]">
            <span className="text-[#8f8f8f]">
              <PlusSmall />
            </span>
            Location Dimension required
          </button>
        </div>
        <Rule />
        <div className="pt-4.5">
          <SectionHead>Bubble Color</SectionHead>
          <button className="mt-5 ml-2 flex h-10 items-center gap-2 text-[25px] text-[#9bb1c8]">
            <PlusSmall />
            Add Measure/Dimension
          </button>
        </div>
        <span className="absolute top-[10px] right-1.5 -bottom-4 w-4 rounded-full bg-[#b2b2b2]" />
      </div>
    </aside>
  );
}

export default function App() {
  return (
    <div className="flex h-screen overflow-hidden bg-white font-[Roboto,sans-serif] text-[28px] leading-8">
      <SideNav />
      <div className="flex min-w-0 flex-1 flex-col">
        <ShellBar />
        <Toolbar />
        <PageTabs />
        <div className="flex min-h-0 flex-1 overflow-hidden">
          <main className="relative min-w-0 flex-1 bg-white">
            <GeoWidget />
          </main>
          <Builder />
        </div>
      </div>
    </div>
  );
}
